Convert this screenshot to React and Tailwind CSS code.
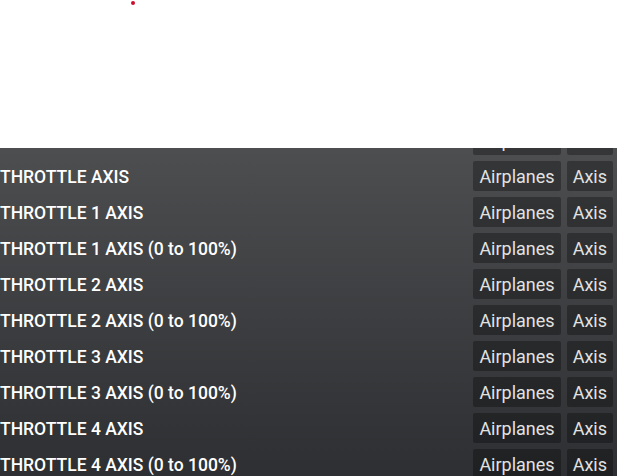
import React from "react";

const rows = [
  "THROTTLE",
  "THROTTLE AXIS",
  "THROTTLE 1 AXIS",
  "THROTTLE 1 AXIS (0 to 100%)",
  "THROTTLE 2 AXIS",
  "THROTTLE 2 AXIS (0 to 100%)",
  "THROTTLE 3 AXIS",
  "THROTTLE 3 AXIS (0 to 100%)",
  "THROTTLE 4 AXIS",
  "THROTTLE 4 AXIS (0 to 100%)",
];

function Row({ label }) {
  return (
    <div className="flex h-[36px] items-center justify-between pr-[4px]">
      <span className="pt-[2px] text-[17.5px] font-medium text-white whitespace-nowrap">{label}</span>
      <div className="flex gap-[6px]">
        <span className="flex h-[30px] items-center rounded-[2px] bg-black/30 px-[6px] text-[18px] text-[#e2e2e2]">
          Airplanes
        </span>
        <span className="flex h-[30px] items-center rounded-[2px] bg-black/30 px-[6px] text-[18px] text-[#e2e2e2]">
          Axis
        </span>
      </div>
    </div>
  );
}

export default function App() {
  return (
    <div className="relative h-[476px] w-[617px] overflow-hidden bg-white" style={{ fontFamily: "Roboto, 'Liberation Sans', sans-serif" }}>
      <div className="absolute left-[131px] top-[1px] h-[4px] w-[4px] rounded-full bg-[#c8102e]" />
      <div className="h-[148px]" />
      <div className="h-[328px] overflow-hidden bg-linear-to-b from-[#4d4e50] to-[#2d2f32]">
        <div className="-mt-[26px]">
          {rows.map((r, i) => (
            <Row key={i} label={r} />
          ))}
        </div>
      </div>
    </div>
  );
}
